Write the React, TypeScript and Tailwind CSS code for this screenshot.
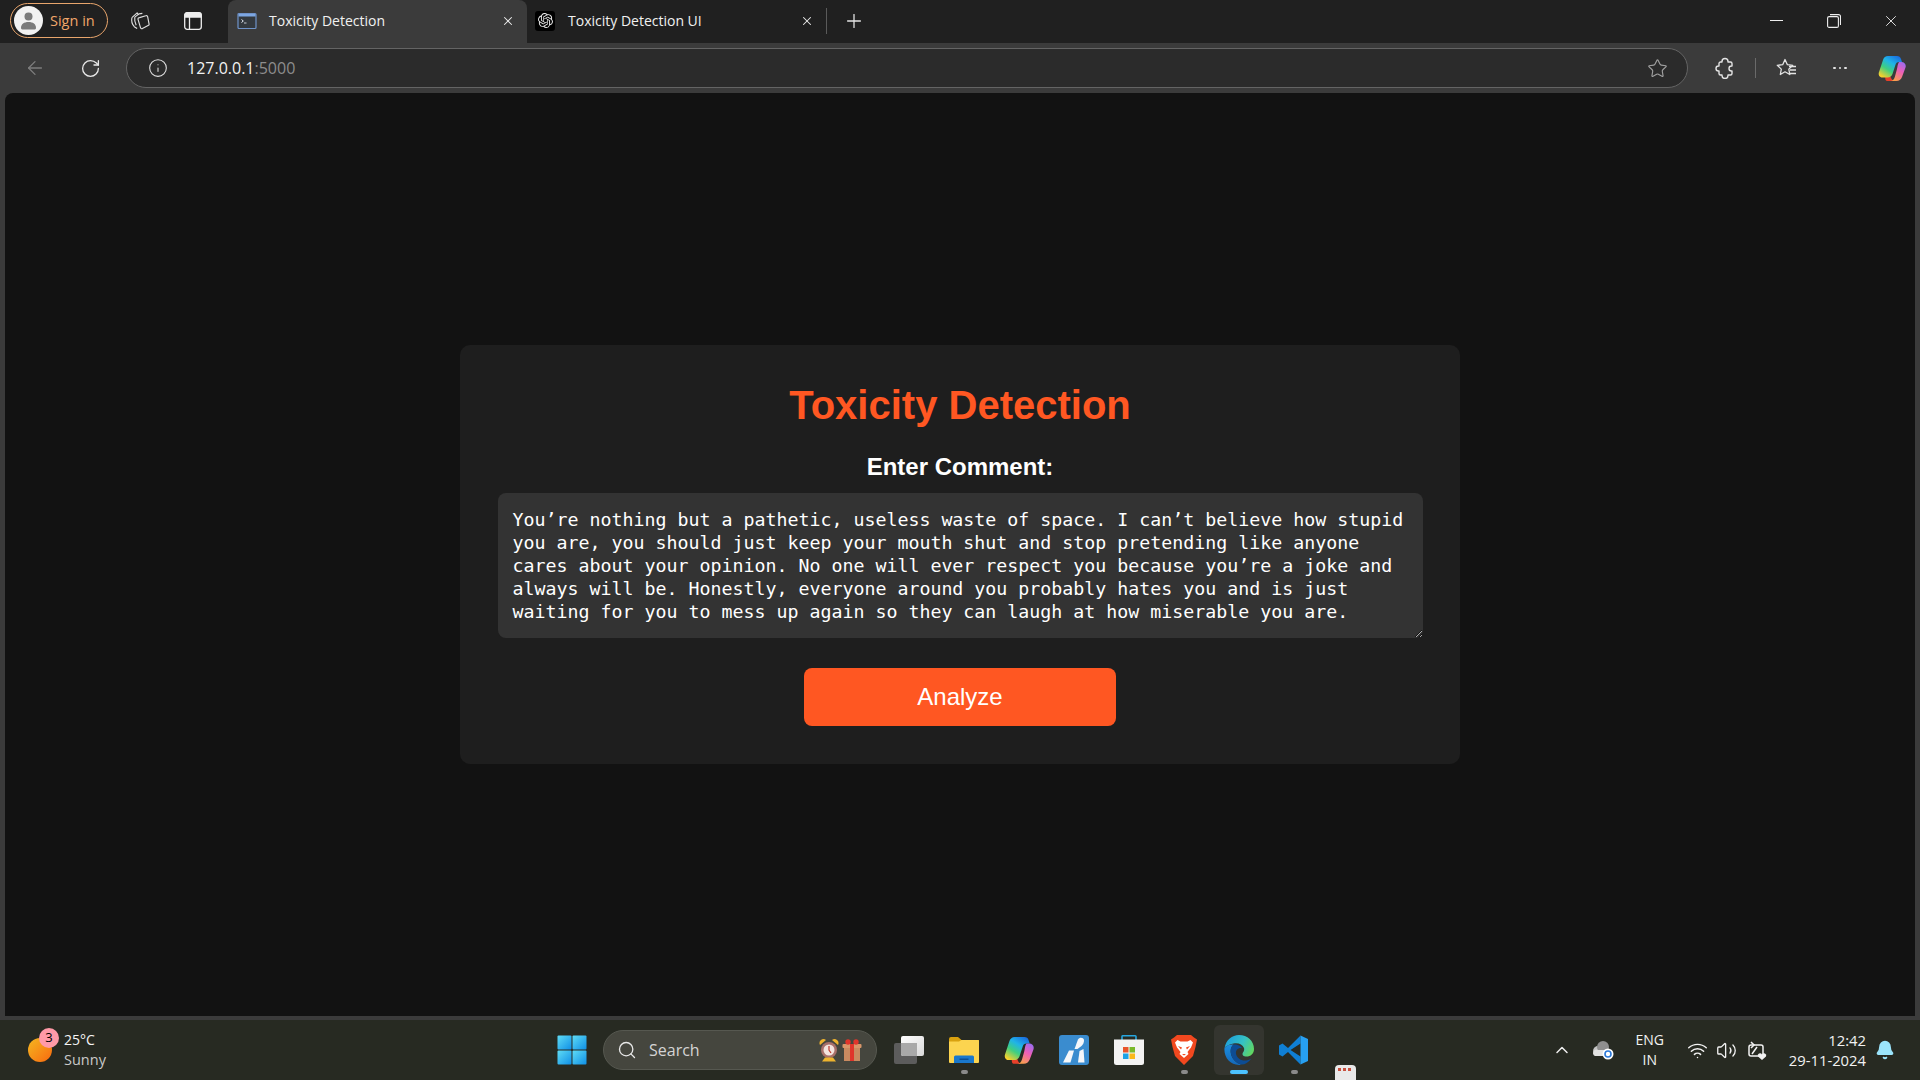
import { ArrowLeft, Bell, ChevronUp, Info, Plus, RotateCw, Search, Star, Volume2, Wifi, X } from "lucide-react";
import { SiOpenai } from "react-icons/si";

const COMMENT =
	"You’re nothing but a pathetic, useless waste of space. I can’t believe how stupid you are, you should just keep your mouth shut and stop pretending like anyone cares about your opinion. No one will ever respect you because you’re a joke and always will be. Honestly, everyone around you probably hates you and is just waiting for you to mess up again so they can laugh at how miserable you are.";

function Workspaces() {
	return (
		<svg width="21" height="21" viewBox="0 0 21 21" fill="none" stroke="#dedede" strokeWidth="1.2" strokeLinejoin="round">
			<path d="M2 7.500 7.500 2.500 9 4.500" />
			<path d="M2 7.500c-.6 3 .2 7 2.500 9.500l3 2" />
			<path d="M5 7 9.500 3.500 13 3" />
			<path d="M5 7c-.4 3 .2 6 1.500 8.500" />
			<path d="M10 7.500 16.500 5.500a1.500 1.500 0 0 1 2 1l1.500 7.500a1.500 1.500 0 0 1-1 1.800l-6 3.200a1.500 1.500 0 0 1-2-1L8.500 9.500a1.500 1.500 0 0 1 1.500-2z" />
		</svg>
	);
}

function VerticalTabs() {
	return (
		<svg width="18" height="18" viewBox="0 0 18 18" fill="none" stroke="#eeeeee" strokeWidth="1.300">
			<rect x="0.700" y="0.700" width="16.600" height="16.600" rx="2.500" />
			<path d="M1 2.500a2 2 0 0 1 2-1.500h12a2 2 0 0 1 2 1.500v2.500H1z" fill="#eeeeee" />
			<path d="M5.500 5v12" />
		</svg>
	);
}

function ConsoleFavicon() {
	return (
		<svg width="20" height="20" viewBox="0 0 20 20">
			<rect x="1" y="2.500" width="18" height="15" rx="1" fill="#33393f" stroke="#6f93c9" strokeWidth="1.200" />
			<rect x="1.500" y="3" width="17" height="2.500" fill="#7da7e3" />
			<path d="M4.500 8.500l1.800 1.500-1.800 1.500" fill="none" stroke="#e6ecf5" strokeWidth="1" />
			<path d="M7 12h2.500" stroke="#e6ecf5" strokeWidth="0.800" />
		</svg>
	);
}

function FavoritesList() {
	return (
		<svg width="22" height="22" viewBox="0 0 22 22" fill="none" stroke="#e4e4e4" strokeWidth="1.300">
			<path d="M10 2.500l2.400 5.200 5.400.6-4 3.800 1 5.400-4.800-2.700-4.700 2.700 1-5.400-4-3.800 5.400-.6z" strokeLinejoin="round" />
			<path d="M14 9.500h7M15 13h6M14 16.500h7" />
		</svg>
	);
}

function PuzzleIcon() {
	return (
		<svg width="20" height="22" viewBox="0 0 20 22" fill="none" stroke="#e4e4e4" strokeWidth="1.400" strokeLinejoin="round">
			<path d="M7 5V4.500a3 3 0 0 1 6 0V5h2.500A1.500 1.500 0 0 1 17 6.500V9h-.5a2.500 2.500 0 0 0 0 5H17v2.500a1.500 1.500 0 0 1-1.500 1.500H13v.5a3 3 0 0 1-6 0V18H5.500a1.500 1.500 0 0 1-1.500-1.500V14h-.5a2.500 2.500 0 0 1 0-5H4V6.500A1.500 1.500 0 0 1 5.500 5z" />
		</svg>
	);
}

function CopilotLogo({ width, id }: { width: number; id: string }) {
	return (
		<svg width={width} height={(width * 26) / 28} viewBox="0 0 28 26">
			<defs>
				<linearGradient id={`${id}a`} x1="0.800" y1="0" x2="0.150" y2="0.950">
					<stop offset="0" stopColor="#1a6fe0" />
					<stop offset="0.350" stopColor="#20b4e8" />
					<stop offset="0.650" stopColor="#3fcf80" />
					<stop offset="1" stopColor="#f4d02e" />
				</linearGradient>
				<linearGradient id={`${id}b`} x1="0.800" y1="0" x2="0.300" y2="1">
					<stop offset="0" stopColor="#9a6cf0" />
					<stop offset="0.450" stopColor="#ee5fb8" />
					<stop offset="1" stopColor="#f9a04a" />
				</linearGradient>
			</defs>
			<path d="M9 12 L13 23 C13.800 25 15.500 26 18 26 H9 C7 26 7 22 7.500 20z" fill="#e8402a" />
			<path d="M10 1 H19 C21 1 22.500 2 23 4 L24 7 H21 C19 7 18 8 17.400 10 L14.500 19 C13.700 21 12 22.500 9.500 22.500 H4.500 C1.500 22.500 0 20 1 17 L5 5 C5.800 2.500 7.500 1 10 1z" fill={`url(#${id}a)`} />
			<path d="M21 7 H23.500 C26.500 7 28.500 9.500 27.500 12.500 L24 22 C23 24.500 21 26 18.500 26 H12.500 C14.500 26 16 24.500 16.800 22 L19 14 C19.500 12 19.500 9 21 7z" fill={`url(#${id}b)`} />
		</svg>
	);
}

function WindowsLogo() {
	return (
		<svg width="30" height="30" viewBox="0 0 30 30">
			<defs>
				<linearGradient id="winGrad" x1="0" y1="0" x2="1" y2="1">
					<stop offset="0" stopColor="#5fdcf5" />
					<stop offset="1" stopColor="#0f8fe6" />
				</linearGradient>
			</defs>
			<rect x="0.500" y="0.500" width="14" height="14" rx="1" fill="url(#winGrad)" />
			<rect x="15.500" y="0.500" width="14" height="14" rx="1" fill="url(#winGrad)" />
			<rect x="0.500" y="15.500" width="14" height="14" rx="1" fill="url(#winGrad)" />
			<rect x="15.500" y="15.500" width="14" height="14" rx="1" fill="url(#winGrad)" />
		</svg>
	);
}

function TaskView() {
	return (
		<svg width="30" height="28" viewBox="0 0 30 28">
			<defs>
				<linearGradient id="tvFront" x1="0" y1="0" x2="1" y2="1">
					<stop offset="0" stopColor="#ffffff" />
					<stop offset="1" stopColor="#d9d9d9" />
				</linearGradient>
			</defs>
			<rect x="0" y="7" width="23" height="21" rx="2" fill="#5c5c5c" />
			<rect x="7" y="0" width="23" height="20" rx="2" fill="url(#tvFront)" />
			<path d="M7 7h16v13H9a2 2 0 0 1-2-2z" fill="#a9a9a9" />
		</svg>
	);
}

function Explorer() {
	return (
		<svg width="30" height="26" viewBox="0 0 30 26">
			<path d="M0 2a2 2 0 0 1 2-2h7l3.500 3H30v3H0z" fill="#d9a10f" />
			<path d="M0 4.500h10l2.500-1.500H29a1 1 0 0 1 1 1v21a1 1 0 0 1-1 1H1a1 1 0 0 1-1-1z" fill="#fcd44f" />
			<path d="M5 20a1.500 1.500 0 0 1 1.500-1.500h17A1.500 1.500 0 0 1 25 20v6H5z" fill="#1a78cc" />
			<rect x="10.500" y="21.500" width="9" height="1.500" fill="#0b4f94" />
		</svg>
	);
}

function AzureApp() {
	return (
		<svg width="30" height="30" viewBox="0 0 30 30">
			<rect x="0" y="0" width="30" height="30" rx="3" fill="#3a8ccf" />
			<path d="M4 27.500 10 15.500h5L11.500 27.500z" fill="#f5f7fa" />
			<path d="M15.500 14 19 4.500c1.500-2.500 5.500-2 6 .5.300 2-1 4.500-2.500 6l-4 3z" fill="#f5f7fa" />
			<path d="M20.500 16l4-2 1 13.500h-6.500z" fill="#f5f7fa" />
		</svg>
	);
}

function StoreLogo() {
	return (
		<svg width="30" height="30" viewBox="0 0 30 30">
			<path d="M8 5V1.500A.8.800 0 0 1 8.800.8h12.400a.8.800 0 0 1 .8.8V5" fill="none" stroke="#27a7e0" strokeWidth="1.600" />
			<path d="M0 4.500h30v23a2.500 2.500 0 0 1-2.500 2.500h-25A2.500 2.500 0 0 1 0 27.500z" fill="#f3f3f3" />
			<rect x="9" y="12" width="5.500" height="5.500" fill="#e8552b" />
			<rect x="15.500" y="12" width="5.500" height="5.500" fill="#7ab92c" />
			<rect x="9" y="18.500" width="5.500" height="5.500" fill="#1ca2e6" />
			<rect x="15.500" y="18.500" width="5.500" height="5.500" fill="#f9b81b" />
		</svg>
	);
}

function BraveLogo() {
	return (
		<svg width="26" height="30" viewBox="0 0 26 30">
			<path d="M6 0h14l3 2.500 3 2-1.500 7.500L22 21l-9 9-9-9-2.500-9L0 4.500l3-2z" fill="#f1481f" />
			<path d="M6.500 5l3 1.500h7l3-1.500 2.500 2.500-2 5-2 2.500-1.500 2 1 2-4.500 4-4.500-4 1-2-1.500-2-2-2.500-2-5z" fill="#ffffff" />
			<path d="M7 11l4 1.500-1 2zM19 11l-4 1.500 1 2z" fill="#f1481f" />
			<path d="M11 19h4l-2 1.500z" fill="#f1481f" />
		</svg>
	);
}

function EdgeLogo() {
	return (
		<svg width="30" height="30" viewBox="0 0 30 30">
			<defs>
				<linearGradient id="edgeA" x1="0" y1="0.300" x2="1" y2="0.700">
					<stop offset="0" stopColor="#1d9fdc" />
					<stop offset="0.550" stopColor="#35c1c4" />
					<stop offset="1" stopColor="#62d75f" />
				</linearGradient>
				<linearGradient id="edgeB" x1="0.500" y1="0" x2="0.500" y2="1">
					<stop offset="0" stopColor="#1c8fe0" />
					<stop offset="1" stopColor="#1467b8" />
				</linearGradient>
			</defs>
			<path d="M0.500 13C2 5 8 0 15 0C23.500 0 30 6 30 14C30 19 26 22 21.500 21.500C18.500 21 18 19 19 17.500C20 16 20.500 14.500 20 13C18.500 9 14 7.500 9.500 8.500C5 9.500 2 11 0.500 13z" fill="url(#edgeA)" />
			<path d="M0.500 13C3 10 6.500 9 9.500 9.500C7 11.500 6 15 7 19C8 24 12 28 17 29.500C16 30 15.500 30 15 30C6 30 -0.500 22 0.500 13z" fill="url(#edgeB)" />
			<path d="M9.500 9.500C13 9 17 11 18 13C14 12.500 11.500 15 12 18.500C12.500 23 17 26 22 25.500C24 25.300 26 24.500 27.500 23.500C24.500 27.500 20 30 17 29.500C12 28 8 24 7 19C6 15 7 11.500 9.500 9.500z" fill="#0d4c94" />
		</svg>
	);
}

function VsCodeLogo() {
	return (
		<svg width="30" height="30" viewBox="0 0 30 30">
			<path d="M21.500 0.500 L9 13 L3.500 8.500 L0 10.500 V19.500 L3.500 21.500 L9 17 L21.500 29.500 V21.500 L11.500 15 L21.500 8.500 z" fill="#0f7fd4" />
			<path d="M21.500 0.500 L29 4 V26 L21.500 29.500 z" fill="#27a0f2" />
		</svg>
	);
}

function TaskbarSlot({ children, dot, active }: { children: React.ReactNode; dot?: boolean; active?: boolean }) {
	return (
		<div className={`relative flex h-[50px] w-[50px] items-center justify-center rounded-md ${active ? "bg-[#34352f]" : ""}`}>
			{children}
			{dot && <span className="absolute bottom-[1px] left-[22px] h-[4px] w-[7px] rounded-full bg-[#8a8a8a]" />}
			{active && <span className="absolute bottom-[1px] left-[16px] h-[4px] w-[18px] rounded-full bg-[#4cc2ff]" />}
		</div>
	);
}

function Tab({ title, favicon, active }: { title: string; favicon: React.ReactNode; active?: boolean }) {
	return (
		<div className={`flex h-[43px] w-[299px] items-center pb-[2px] ${active ? "rounded-t-lg bg-[#3b3b3b] pl-[9px] pr-[12px]" : "pl-[8px] pr-[12px]"}`}>
			<div className="flex h-[20px] w-[20px] items-center justify-center">{favicon}</div>
			<span className={`flex-1 text-[14px] text-[#f1f1f1] ${active ? "ml-[12px]" : "ml-[13px]"}`}>{title}</span>
			<X size={14} color="#ececec" strokeWidth={1.8} />
		</div>
	);
}

export default function App() {
	return (
		<div className="flex h-[1080px] w-[1920px] flex-col overflow-hidden bg-[#3b3b3b] font-['Open_Sans','Noto_Sans',sans-serif]">
			{/* 탭 바 */}
			<div className="flex h-[43px] items-center bg-[#202020] pb-[2px]">
				<div className="ml-[10px] flex h-[35px] w-[98px] items-center rounded-full border border-[#e8a56c] pl-[3px]">
					<div className="flex h-[29px] w-[29px] items-center justify-center overflow-hidden rounded-full bg-[#f2f2f2]">
						<svg width="21" height="21" viewBox="0 0 21 21" fill="#7b7b7b">
							<circle cx="10.500" cy="6.500" r="4" />
							<path d="M3 18c0-4 3-6 7.500-6s7.500 2 7.500 6c0 1-1 1.500-2 1.500H5c-1 0-2-.5-2-1.500z" />
						</svg>
					</div>
					<span className="ml-[7px] text-[14.500px] text-[#f0a66a]">Sign in</span>
				</div>
				<div className="ml-[22px] flex w-[20px] justify-center">
					<Workspaces />
				</div>
				<div className="ml-[33px] flex w-[20px] justify-center">
					<VerticalTabs />
				</div>
				<div className="-mb-[2px] ml-[25px] flex self-end">
					<Tab title="Toxicity Detection" favicon={<ConsoleFavicon />} active />
					<Tab
						title="Toxicity Detection UI"
						favicon={
							<div className="flex h-[20px] w-[20px] items-center justify-center rounded-[3px] bg-black">
								<SiOpenai size={15} color="#e8e8e8" />
							</div>
						}
					/>
				</div>
				<div className="h-[26px] w-px bg-[#5a5a5a]" />
				<div className="ml-[16px]">
					<Plus size={22} color="#e4e4e4" strokeWidth={1.4} />
				</div>
				<div className="ml-auto flex h-full items-center">
					<div className="flex w-[57px] justify-center">
						<div className="h-[1.500px] w-[13px] bg-[#eeeeee]" />
					</div>
					<div className="flex w-[57px] justify-center">
						<svg width="14" height="14" viewBox="0 0 14 14" fill="none" stroke="#eeeeee" strokeWidth="1.100">
							<rect x="0.600" y="2.600" width="10.800" height="10.800" rx="1.500" />
							<path d="M3 .6h8.500a2 2 0 0 1 2 2V11" />
						</svg>
					</div>
					<div className="mr-[1px] flex w-[57px] justify-center">
						<X size={18} color="#eeeeee" strokeWidth={1.2} />
					</div>
				</div>
			</div>

			{/* 주소 표시줄 */}
			<div className="flex h-[50px] items-center">
				<div className="ml-[24px] flex w-[22px] justify-center">
					<ArrowLeft size={22} color="#7e7e7e" strokeWidth={1.4} />
				</div>
				<div className="ml-[33px] flex w-[22px] justify-center">
					<RotateCw size={21} color="#e8e8e8" strokeWidth={1.5} />
				</div>
				<div className="ml-[25px] flex h-[40px] w-[1562px] items-center rounded-full border border-[#646464] bg-[#2b2b2b]">
					<div className="ml-[21px] flex w-[20px] justify-center">
						<Info size={20} color="#e0e0e0" strokeWidth={1.3} />
					</div>
					<span className="ml-[19px] text-[16px] text-[#f2f2f2]">
						127.0.0.1<span className="text-[#8d8d8d]">:5000</span>
					</span>
					<div className="ml-auto mr-[19px]">
						<Star size={21} color="#a0a0a0" strokeWidth={1.3} />
					</div>
				</div>
				<div className="ml-[27px] flex w-[20px] justify-center">
					<PuzzleIcon />
				</div>
				<div className="ml-[20px] h-[20px] w-px bg-[#6a6a6a]" />
				<div className="ml-[19px] flex w-[22px] justify-center">
					<FavoritesList />
				</div>
				<div className="ml-[32px] flex w-[22px] justify-center gap-[3px]">
					<span className="h-[2.500px] w-[2.500px] rounded-full bg-[#e4e4e4]" />
					<span className="h-[2.500px] w-[2.500px] rounded-full bg-[#e4e4e4]" />
					<span className="h-[2.500px] w-[2.500px] rounded-full bg-[#e4e4e4]" />
				</div>
				<div className="ml-[27px]">
					<CopilotLogo width={28} id="cpTop" />
				</div>
			</div>

			{/* 페이지 */}
			<div className="mx-[5px] flex h-[923px] items-center justify-center rounded-t-lg bg-[#121212] font-['Liberation_Sans',sans-serif]">
				<div className="flex h-[419px] w-[1000px] flex-col items-center rounded-[10px] bg-[#1e1e1e] px-[38px] pt-[37px]">
					<h1 className="text-[40px] font-bold leading-[46px] text-[#ff5722]">Toxicity Detection</h1>
					<label className="mt-[25px] text-[24px] font-bold leading-[28px] text-white">Enter Comment:</label>
					<textarea
						readOnly
						defaultValue={COMMENT}
						className="mt-[12px] h-[145px] w-[925px] rounded-lg bg-[#333333] px-[15px] py-[15px] font-['DejaVu_Sans_Mono',monospace] text-[18.270px] leading-[23px] text-white outline-none"
					/>
					<button className="mt-[30px] h-[58px] w-[312px] rounded-lg bg-[#ff5722] text-[24px] text-white">Analyze</button>
				</div>
			</div>
			<div className="h-[4px]" />

			{/* 작업 표시줄 */}
			<div className="relative flex h-[60px] items-center bg-[#272a22] text-white">
				<div className="relative ml-[28px] h-[24px] w-[24px] rounded-full bg-gradient-to-br from-[#f2b620] to-[#f7670f]">
					<span className="absolute left-[11px] top-[-10px] flex h-[20px] w-[20px] items-center justify-center rounded-full bg-[#ff9aa8] text-[13px] text-black">3</span>
				</div>
				<div className="ml-[12px] w-[44px] text-[14px] leading-[20px]">
					<div className="text-[#f5f5f5]">25°C</div>
					<div className="text-[14.500px] text-[#c9c9c9]">Sunny</div>
				</div>
				<div className="ml-[449px]">
					<WindowsLogo />
				</div>
				<div className="ml-[16px] flex h-[40px] w-[274px] items-center rounded-full border border-[#565850] bg-[#45463e]">
					<Search size={20} color="#e8e8e8" strokeWidth={1.6} className="ml-[13px]" />
					<span className="ml-[12px] text-[16px] text-[#d4d4d4]">Search</span>
					<div className="ml-auto mr-[14px] flex items-center gap-[3px]">
						<svg width="20" height="24" viewBox="0 0 20 24">
							<path d="M1 7a4 4 0 0 1 6-5zM19 7a4 4 0 0 0-6-5z" fill="#eeb32e" />
							<circle cx="10" cy="12" r="8" fill="#a8706a" />
							<circle cx="10" cy="12" r="5.500" fill="#f3e3de" />
							<path d="M10 8v4l2 3" stroke="#c0392b" strokeWidth="1.200" fill="none" />
							<path d="M3 23.500l3-4h8l3 4z" fill="#eeb32e" />
						</svg>
						<svg width="20" height="24" viewBox="0 0 20 24">
							<rect x="2" y="9" width="16" height="14" fill="#c98a60" />
							<rect x="0.500" y="6" width="19" height="4" rx="1" fill="#d9966a" />
							<rect x="8" y="6" width="4" height="17" fill="#e0352b" />
							<circle cx="6" cy="4" r="2.700" fill="#e0352b" />
							<circle cx="14" cy="4" r="2.700" fill="#e0352b" />
						</svg>
					</div>
				</div>
				<div className="ml-[7px] flex items-center gap-[5px]">
					<TaskbarSlot>
						<TaskView />
					</TaskbarSlot>
					<TaskbarSlot dot>
						<Explorer />
					</TaskbarSlot>
					<TaskbarSlot>
						<CopilotLogo width={30} id="cpBar" />
					</TaskbarSlot>
					<TaskbarSlot>
						<AzureApp />
					</TaskbarSlot>
					<TaskbarSlot>
						<StoreLogo />
					</TaskbarSlot>
					<TaskbarSlot dot>
						<BraveLogo />
					</TaskbarSlot>
					<TaskbarSlot active>
						<EdgeLogo />
					</TaskbarSlot>
					<TaskbarSlot dot>
						<VsCodeLogo />
					</TaskbarSlot>
				</div>
				<div className="ml-[16px] mt-[45px] h-[15px] w-[21px] overflow-hidden rounded-t-sm bg-[#e9e9e9]">
					<div className="ml-[3px] mt-[3px] flex gap-[2px]">
						<span className="h-[3px] w-[3px] bg-[#c9503f]" />
						<span className="h-[3px] w-[3px] bg-[#c9503f]" />
						<span className="h-[3px] w-[3px] bg-[#c9503f]" />
					</div>
				</div>
				<div className="ml-auto flex items-center">
					<ChevronUp size={20} color="#eeeeee" strokeWidth={1.8} />
					<div className="ml-[20px]">
						<svg width="22" height="20" viewBox="0 0 22 20">
							<circle cx="6" cy="11" r="5" fill="#c4c4c4" />
							<circle cx="11" cy="7" r="6" fill="#8f8f8f" />
							<path d="M3 16h12a3 3 0 0 0 0-6H6a3 3 0 0 0-3 6z" fill="#e2e2e2" />
							<circle cx="16" cy="14" r="5.500" fill="#ffffff" />
							<circle cx="16" cy="14" r="3" fill="none" stroke="#2b78d8" strokeWidth="1.600" />
						</svg>
					</div>
					<div className="ml-[20px] flex w-[32px] flex-col items-center text-[14px] leading-[20px] text-[#f2f2f2]">
						<span>ENG</span>
						<span>IN</span>
					</div>
					<div className="ml-[21px]">
						<Wifi size={21} color="#f2f2f2" strokeWidth={1.7} />
					</div>
					<div className="ml-[8px]">
						<Volume2 size={21} color="#f2f2f2" strokeWidth={1.5} />
					</div>
					<div className="ml-[10px]">
						<svg width="21" height="21" viewBox="0 0 21 21" fill="none" stroke="#f2f2f2" strokeWidth="1.500">
							<rect x="2" y="5" width="14" height="11" rx="2" />
							<path d="M5 14l5-7M4 2l3 3-3 3" />
							<path d="M13 19l-4-3.500a2.200 2.200 0 0 1 4-2 2.200 2.200 0 0 1 4 2z" fill="#f2f2f2" stroke="none" transform="translate(2 1)" />
						</svg>
					</div>
					<div className="ml-[21px] flex flex-col items-end text-[14.800px] leading-[20px] text-[#f2f2f2]">
						<span>12:42</span>
						<span>29-11-2024</span>
					</div>
					<div className="ml-[9px] mr-[25px]">
						<Bell size={20} color="#9be4fb" fill="#9be4fb" />
					</div>
				</div>
			</div>
		</div>
	);
}
